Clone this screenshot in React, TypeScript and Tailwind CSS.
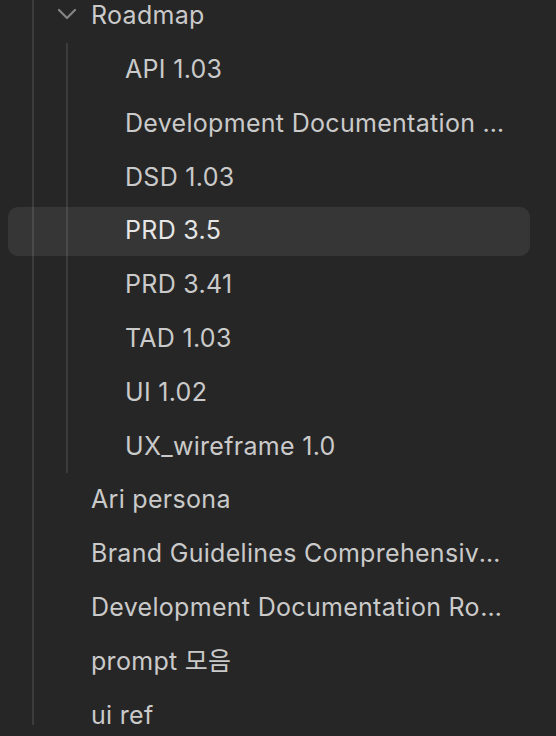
const children = [
  'API 1.03',
  'Development Documentation Roadmap',
  'DSD 1.03',
  'PRD 3.5',
  'PRD 3.41',
  'TAD 1.03',
  'UI 1.02',
  'UX_wireframe 1.0',
]

const rootItems = [
  'Ari persona',
  'Brand Guidelines Comprehensive Overview',
  'Development Documentation Roadmap',
  'prompt 모음',
  'ui ref',
]

const ACTIVE = 'PRD 3.5'

export default function App() {
  return (
    <div
      className="h-screen w-[556px] overflow-hidden bg-[#262626] text-[25px] tracking-[0.3px] text-[#cacaca]"
      style={{ fontFamily: 'Inter, "Noto Sans CJK KR", sans-serif' }}
    >
      <div className="ml-[32px] h-full w-[498px] border-l-2 border-[#3c3c3c]">
        <div className="-mt-[11px]">
          {/* Roadmap folder */}
          <div className="flex h-[53.8px] items-center pl-[23px] pr-[18px]">
            <svg width="20" height="12" viewBox="0 0 20 12" className="mr-[14px] mt-[-4px] flex-shrink-0 text-[#858585]">
              <polyline points="2,2 10,10 18,2" fill="none" stroke="currentColor" strokeWidth="2.2" strokeLinecap="round" strokeLinejoin="round" />
            </svg>
            <span className="truncate">Roadmap</span>
          </div>

          <div className="ml-[32px] border-l-2 border-[#3c3c3c]">
            {children.map((label) => (
              <div key={label} className="flex h-[53.8px] items-center">
                {label === ACTIVE ? (
                  <div className="-ml-[60px] flex h-[49px] w-[calc(100%+60px)] items-center rounded-[10px] bg-white/[0.075] pl-[117px] pr-[18px] text-[#e6e6e6]">
                    <span className="truncate">{label}</span>
                  </div>
                ) : (
                  <div className="flex w-full items-center pl-[57px] pr-[18px]">
                    <span className="truncate">{label}</span>
                  </div>
                )}
              </div>
            ))}
          </div>

          {rootItems.map((label) => (
            <div key={label} className="flex h-[53.8px] items-center pl-[57px] pr-[18px]">
              <span className="truncate">{label}</span>
            </div>
          ))}
        </div>
      </div>
    </div>
  )
}
